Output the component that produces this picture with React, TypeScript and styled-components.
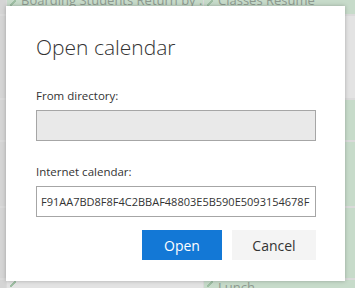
import React from "react";
import styled, { createGlobalStyle } from "styled-components";

const Global = createGlobalStyle`
  html, body { margin: 0; padding: 0; }
  body { width: 355px; height: 288px; overflow: hidden; font-family: "Open Sans", "Noto Sans", sans-serif; }
  * { box-sizing: border-box; }
`;

const Page = styled.div`
  position: relative;
  width: 355px;
  height: 288px;
  overflow: hidden;
`;

const Backdrop = styled.div`
  display: grid;
  grid-template-columns: 6px 196px 1fr;
  grid-template-rows: 14px 82px 40px 64px 70px 1fr;
  column-gap: 1px;
  row-gap: 2px;
  width: 100%;
  height: 100%;
  background: #dadada;
`;

const Cell = styled.div<{ $tone: "green" | "gray" | "light"; $top?: boolean }>`
  background: ${(p) => (p.$tone === "green" ? "#c7dbca" : p.$tone === "gray" ? "#d5d5d5" : "#e3e3e3")};
  color: #8e9a90;
  font-size: 13px;
  line-height: 12px;
  white-space: nowrap;
  overflow: hidden;
  display: flex;
  align-items: flex-start;
  gap: 5px;
  padding-left: 3px;
  padding-top: ${(p) => (p.$top ? 0 : 1)}px;
`;

const CellText = styled.span<{ $shift: number }>`
  margin-top: ${(p) => p.$shift}px;
`;

const Pencil = styled.span<{ $shift?: number }>`
  display: inline-block;
  width: 6px;
  height: 6px;
  margin-top: ${(p) => p.$shift ?? 0}px;
  background: linear-gradient(135deg, transparent 40%, #9fbfa4 40%, #9fbfa4 60%, transparent 60%);
  flex: none;
`;

const Overlay = styled.div`
  position: absolute;
  left: 6px;
  top: 6px;
  width: 339px;
  height: 275px;
  background: #ffffff;
  box-shadow: 0 0 4px rgba(0, 0, 0, 0.25);
  padding: 27px 29px 0 30px;
  display: flex;
  flex-direction: column;
`;

const Title = styled.h1`
  margin: 0;
  font-family: "Open Sans", sans-serif;
  font-weight: 300;
  font-size: 21px;
  line-height: 28px;
  color: #333333;
`;

const Label = styled.div<{ $top: number }>`
  margin-top: ${(p) => p.$top}px;
  font-size: 11.5px;
  line-height: 16px;
  color: #333333;
`;

const Field = styled.div<{ $disabled?: boolean }>`
  margin-top: 6px;
  width: 280px;
  height: 31px;
  border: 1px solid #a6a6a6;
  background: ${(p) => (p.$disabled ? "#e9e9e9" : "#ffffff")};
  padding: 0 0 0 4px;
  font-size: 11px;
  line-height: 29px;
  color: #333333;
  white-space: nowrap;
  overflow: hidden;
`;

const Actions = styled.div`
  margin-top: 13px;
  width: 280px;
  display: flex;
  justify-content: flex-end;
  gap: 10px;
`;

const Button = styled.button<{ $primary?: boolean }>`
  height: 30px;
  width: ${(p) => (p.$primary ? 80 : 84)}px;
  border: none;
  padding: 0;
  font-family: "Open Sans", sans-serif;
  font-size: 14px;
  font-weight: 400;
  background: ${(p) => (p.$primary ? "#1378d6" : "#f4f4f4")};
  color: ${(p) => (p.$primary ? "#ffffff" : "#333333")};
`;

export default function App() {
  return (
    <>
      <Global />
      <Page>
        <Backdrop>
          <Cell $tone="gray" $top />
          <Cell $tone="green" $top><Pencil $shift={0} /><CellText $shift={-6}>Boarding Students Return by ...</CellText></Cell>
          <Cell $tone="green" $top><Pencil $shift={0} /><CellText $shift={-6}>Classes Resume</CellText></Cell>
          <Cell $tone="gray" />
          <Cell $tone="light" />
          <Cell $tone="light" />
          <Cell $tone="gray" />
          <Cell $tone="light" />
          <Cell $tone="green" />
          <Cell $tone="gray" />
          <Cell $tone="light" />
          <Cell $tone="green" />
          <Cell $tone="gray" />
          <Cell $tone="light" />
          <Cell $tone="green" />
          <Cell $tone="gray" />
          <Cell $tone="light"><Pencil /></Cell>
          <Cell $tone="green"><Pencil /><CellText $shift={0}>Lunch</CellText></Cell>
        </Backdrop>
        <Overlay>
          <Title>Open calendar</Title>
          <Label $top={27}>From directory:</Label>
          <Field $disabled />
          <Label $top={23}>Internet calendar:</Label>
          <Field>F91AA7BD8F8F4C2BBAF48803E5B590E5093154678F</Field>
          <Actions>
            <Button $primary>Open</Button>
            <Button>Cancel</Button>
          </Actions>
        </Overlay>
      </Page>
    </>
  );
}
